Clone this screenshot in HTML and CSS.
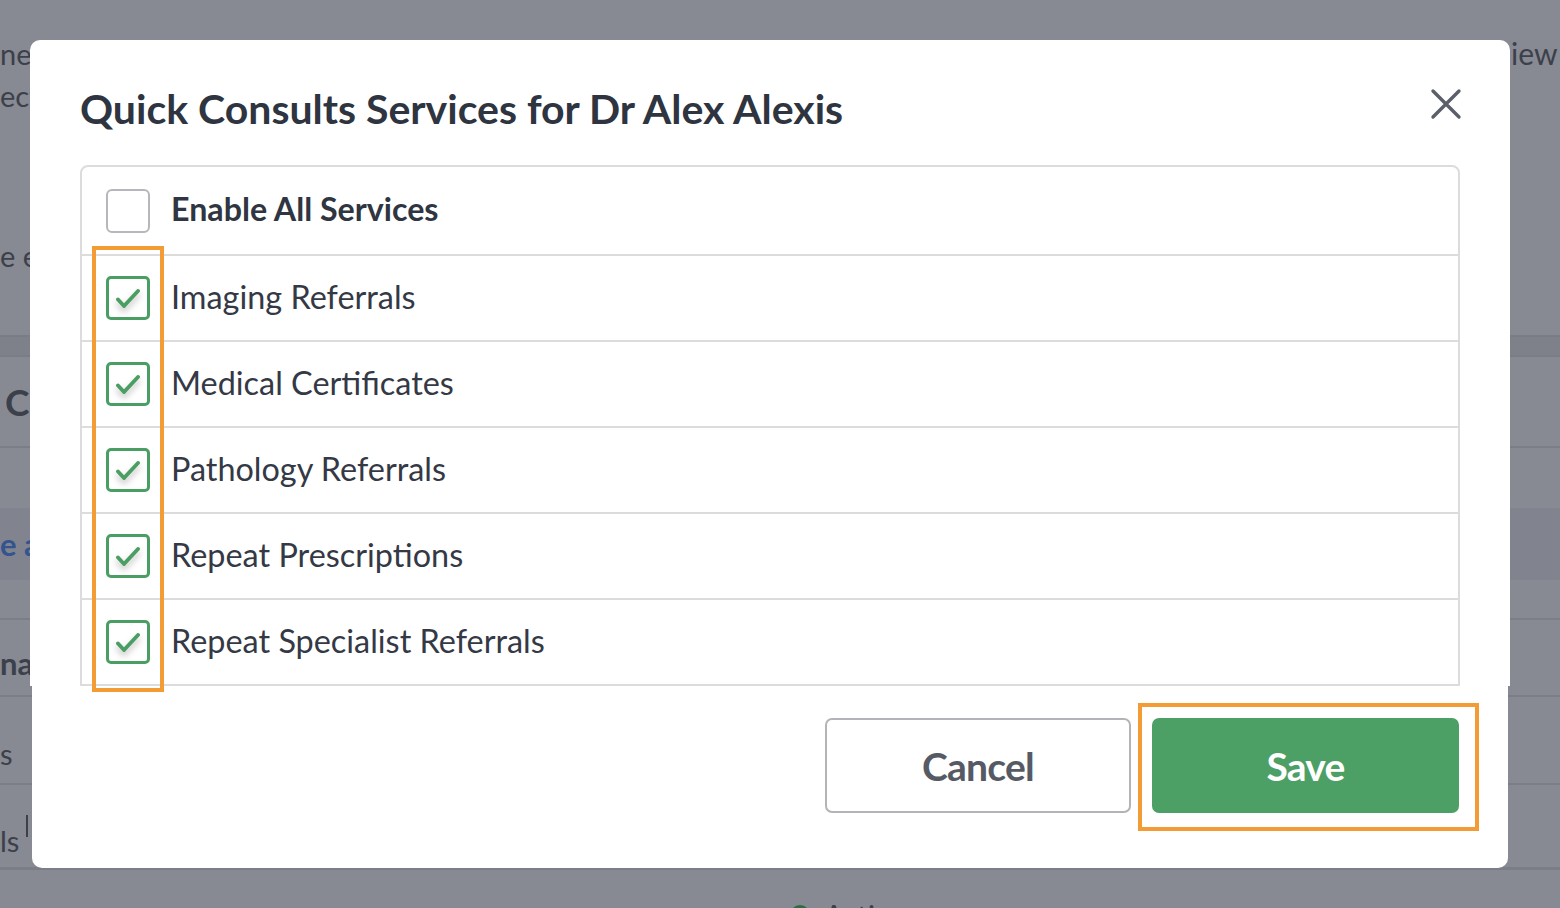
FILE: index.html
```html
<!DOCTYPE html>
<html lang="en">
<head>
<meta charset="utf-8">
<title>Quick Consults Services</title>
<link rel="stylesheet" href="styles.css">
</head>
<body>
<div class="page">
  <div class="bg-row r1"><span class="lt">ne</span><span class="rt">iew</span></div>
  <div class="bg-row r2"><span class="lt">ect</span></div>
  <div class="bg-row r3"><span class="lt">e e</span></div>
  <div class="bg-row r4"></div>
  <div class="bg-row band"></div>
  <div class="bg-row r6"><span class="lt big">C</span></div>
  <div class="bg-row r8"></div>
  <div class="bg-row hl"><span class="lt blue">e a</span></div>
  <div class="bg-row r10"></div>
  <div class="bg-row r11"><span class="lt bold">na</span></div>
  <div class="bg-row r12"><span class="lt">s</span></div>
  <div class="bg-row r13"><span class="lt">ls</span><span class="bar"></span></div>
  <div class="bg-row r14"><span class="status"><span class="dot"></span>Active</span></div>
</div>

<div class="modal">
  <div class="modal-top">
    <div class="modal-head">
      <h1 class="title">Quick Consults Services for Dr Alex Alexis</h1>
      <button class="close" aria-label="Close">
        <svg width="32" height="32" viewBox="0 0 32 32"><path d="M3 3 L29 29 M29 3 L3 29" stroke="#5b5f69" stroke-width="3.4" stroke-linecap="round" fill="none"/></svg>
      </button>
    </div>
    <div class="list">
      <div class="row head-row">
        <span class="cb"></span>
        <span class="label bold-label">Enable All Services</span>
      </div>
      <div class="row">
        <span class="cb checked"><svg width="44" height="44" viewBox="0 0 44 44"><path d="M12 23.5 L18 30 L32 15" class="tick"/></svg></span>
        <span class="label">Imaging Referrals</span>
      </div>
      <div class="row">
        <span class="cb checked"><svg width="44" height="44" viewBox="0 0 44 44"><path d="M12 23.5 L18 30 L32 15" class="tick"/></svg></span>
        <span class="label">Medical Certificates</span>
      </div>
      <div class="row">
        <span class="cb checked"><svg width="44" height="44" viewBox="0 0 44 44"><path d="M12 23.5 L18 30 L32 15" class="tick"/></svg></span>
        <span class="label">Pathology Referrals</span>
      </div>
      <div class="row">
        <span class="cb checked"><svg width="44" height="44" viewBox="0 0 44 44"><path d="M12 23.5 L18 30 L32 15" class="tick"/></svg></span>
        <span class="label">Repeat Prescriptions</span>
      </div>
      <div class="row last">
        <span class="cb checked"><svg width="44" height="44" viewBox="0 0 44 44"><path d="M12 23.5 L18 30 L32 15" class="tick"/></svg></span>
        <span class="label">Repeat Specialist Referrals</span>
      </div>
    </div>
  </div>
  <div class="modal-foot">
    <button class="btn cancel">Cancel</button>
    <button class="btn save">Save</button>
  </div>
</div>

<div class="mark mark-checks"></div>
<div class="mark mark-save"></div>
</body>
</html>
```

FILE: styles.css
```css
* { box-sizing: border-box; }
html, body { margin: 0; padding: 0; }
body {
  width: 1560px;
  height: 908px;
  overflow: hidden;
  background: #878a93;
  font-family: Lato, "Open Sans", sans-serif;
  position: relative;
}

/* background page (dimmed) */
.page { display: flex; flex-direction: column; width: 1560px; }
.bg-row { position: relative; display: flex; align-items: center; justify-content: space-between; color: #3c404a; font-size: 29px; }
.bg-row .rt { padding-left: 1511px; position: absolute; left: 0; font-size: 30px; }
.r1 { height: 75px; align-items: flex-end; padding-bottom: 4px; }
.r2 { height: 40px; }
.r3 { height: 160px; align-items: flex-end; padding-bottom: 2px; }
.r4 { height: 60px; }
.band { height: 22px; background: #7e818a; border-top: 2px solid #7a7d86; border-bottom: 2px solid #7a7d86; }
.r6 { height: 91px; border-bottom: 2px solid #7b7e87; }
.big { font-size: 37px; font-weight: 700; padding-left: 5px; }
.r8 { height: 60px; }
.hl { height: 72px; background: #81848e; }
.blue { color: #34548f; font-weight: 700; font-size: 31px; }
.r10 { height: 40px; border-bottom: 2px solid #7b7e87; }
.r11 { height: 77px; border-bottom: 2px solid #7b7e87; padding-top: 10px; }
.bold { font-weight: 700; font-size: 31px; }
.r12 { height: 88px; border-bottom: 2px solid #7b7e87; padding-top: 26px; }
.r13 { height: 85px; border-bottom: 3px solid #7b7e87; padding-top: 28px; }
.bar { position: absolute; left: 26px; top: 30px; width: 2px; height: 22px; background: #3c404a; }
.r14 { height: 40px; align-items: flex-end; }
.status { display: flex; align-items: center; gap: 14px; padding-left: 790px; margin-bottom: -22px; }
.dot { width: 20px; height: 20px; border-radius: 50%; background: #2f6b45; }

/* modal */
.modal {
  position: absolute;
  left: 30px;
  top: 40px;
  width: 1480px;
  display: flex;
  flex-direction: column;
}
.modal-top {
  background: #fff;
  border-radius: 10px 10px 0 0;
  padding: 44px 50px 0 50px;
}
.modal-head {
  display: flex;
  align-items: flex-start;
  justify-content: space-between;
  margin-bottom: 32px;
}
.title {
  margin: 0;
  font-size: 41px;
  line-height: 49px;
  font-weight: 700;
  color: #2e3440;
}
.close {
  border: 0;
  background: none;
  padding: 0;
  margin: 4px -2px 0 0;
  width: 32px;
  height: 32px;
  display: block;
}
.close svg { display: block; }

.list {
  border: 2px solid #dcdcdc;
  border-radius: 8px 8px 0 0;
  display: flex;
  flex-direction: column;
}
.row {
  display: flex;
  align-items: center;
  gap: 21px;
  height: 86px;
  padding-left: 24px;
  border-bottom: 2px solid #dcdcdc;
}
.row.head-row { height: 89px; }
.row.last { border-bottom: 0; height: 84px; }
.cb {
  width: 44px;
  height: 44px;
  flex: none;
  border: 2px solid #b6b6bc;
  border-radius: 6px;
  position: relative;
  display: block;
}
.cb.checked { border: 3px solid #4a9e63; border-radius: 5px; }
.cb svg {
  position: absolute;
  left: -3px;
  top: -3px;
  filter: drop-shadow(0 4px 3px rgba(0,0,0,0.25));
}
.tick { fill: none; stroke: #4a9e63; stroke-width: 3.8; stroke-linecap: round; stroke-linejoin: round; }
.label {
  font-size: 32.4px;
  color: #343945;
  line-height: 1;
  padding-bottom: 2px;
}
.bold-label { font-weight: 700; font-size: 32.2px; color: #2f3541; }

.modal-foot {
  background: #fff;
  margin: 0 2px;
  border-radius: 0 0 10px 10px;
  padding: 32px 49px 55px 49px;
  display: flex;
  justify-content: flex-end;
  gap: 21px;
}
.btn {
  width: 307px;
  height: 95px;
  font-family: Lato, "Open Sans", sans-serif;
  font-weight: 700;
  font-size: 39px;
  letter-spacing: -0.8px;
  border-radius: 7px;
  cursor: pointer;
}
.cancel { background: #fff; border: 2px solid #b3b3b8; color: #565a65; width: 306px; }
.save { background: #4ca065; border: 0; color: #fff; }

/* annotation marks */
.mark { position: absolute; border: 4px solid #f39c36; pointer-events: none; }
.mark-checks { left: 92px; top: 246px; width: 72px; height: 446px; }
.mark-save { left: 1138px; top: 703px; width: 341px; height: 128px; }
```
